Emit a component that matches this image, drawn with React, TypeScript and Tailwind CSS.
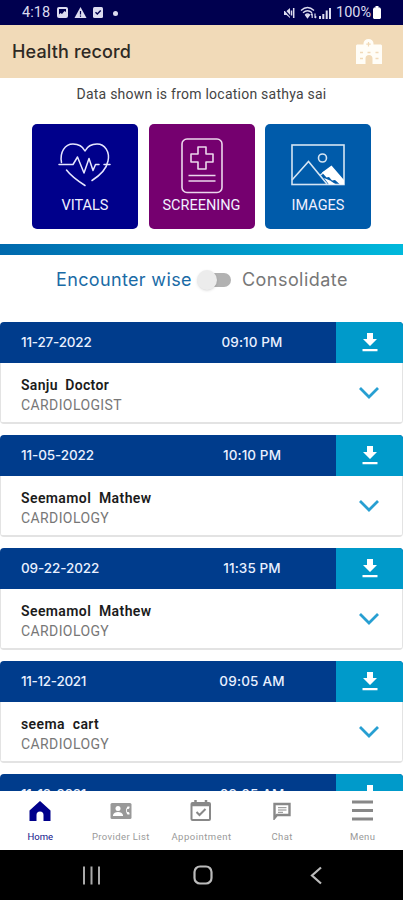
import React from "react";

type Encounter = { date: string; time: string; name: string; dept: string; dateGap: string; timeGap: string; nameGap: string };

const encounters: Encounter[] = [
  { date: "11-27-2022", time: "09:10 PM", name: "Sanju  Doctor", dept: "CARDIOLOGIST", dateGap: "tracking-[-0.2px]", timeGap: "tracking-[0.1px]", nameGap: "tracking-[0.3px]" },
  { date: "11-05-2022", time: "10:10 PM", name: "Seemamol  Mathew", dept: "CARDIOLOGY", dateGap: "tracking-[-0.1px]", timeGap: "tracking-[0.1px]", nameGap: "tracking-[0.4px]" },
  { date: "09-22-2022", time: "11:35 PM", name: "Seemamol  Mathew", dept: "CARDIOLOGY", dateGap: "tracking-[-0.1px]", timeGap: "tracking-[0.1px]", nameGap: "tracking-[0.4px]" },
  { date: "11-12-2021", time: "09:05 AM", name: "seema  cart", dept: "CARDIOLOGY", dateGap: "tracking-[-0.3px]", timeGap: "tracking-[0.2px]", nameGap: "tracking-[0.4px]" },
];

function StatusBar() {
  return (
    <div className="flex h-[25px] shrink-0 items-center bg-[#00004f] pl-[22px] pr-[21px] text-[#dcdcf0]">
      <span className="w-[30px] whitespace-nowrap text-[14.5px] leading-[26px] tracking-[0.1px]">4:18</span>
      <svg className="ml-[4px]" width="13" height="13" viewBox="0 0 13 13">
        <rect x="1" y="1" width="11" height="11" rx="2" fill="currentColor" />
        <path d="M3 3h7v3L8.500 5 6 8 4.500 7 3 8.500z" fill="#00004f" />
      </svg>
      <svg className="ml-[5px]" width="13" height="13" viewBox="0 0 13 13">
        <path d="M6.500 1 12.500 12H.5z" fill="currentColor" />
        <path d="M6.500 5v3.500M6.500 9.500v1.300" stroke="#00004f" strokeWidth="1.200" />
      </svg>
      <svg className="ml-[5px]" width="12" height="13" viewBox="0 0 12 13">
        <rect x="1" y="1" width="10" height="11" rx="1.500" fill="currentColor" />
        <path d="M3.500 6.300 5.300 8 8.700 4.500" fill="none" stroke="#00004f" strokeWidth="1.400" />
      </svg>
      <span className="ml-[9px] mt-[1px] h-[5px] w-[5px] rounded-full bg-[#dcdcf0]" />
      <div className="flex-1" />
      <svg width="12" height="12" viewBox="0 0 12 12" fill="currentColor">
        <path d="M1 4h2.500L7 1v10L3.500 8H1z" />
        <path d="M8.500 3.500v5M10.700 1v10" stroke="currentColor" strokeWidth="1.500" />
        <path d="M0 1.200 8 10" stroke="#00004f" strokeWidth="1.200" />
      </svg>
      <svg className="ml-[5px]" width="17" height="13" viewBox="0 0 17 13" fill="none" stroke="currentColor" strokeWidth="1.400">
        <path d="M1 4.500Q7.500-1.500 14 4.500M3 6.700q4.500-4 9 0M5.300 8.900q2.200-2 4.400 0" />
        <path d="M7.500 11.500 6 9.500h3z" fill="currentColor" />
        <path d="M12.200 12V7.500M10.900 9l1.300-1.500M15 7.500V12M16.300 10.500 15 12" strokeWidth="1.200" />
      </svg>
      <svg className="ml-[2px]" width="13" height="12" viewBox="0 0 13 12" fill="currentColor">
        <path d="M0 9h2v3H0zM3.300 7h2v5h-2zM6.700 3.500h2V12h-2zM10 1h2v11h-2z" />
      </svg>
      <span className="ml-[4px] w-[36px] whitespace-nowrap text-[14.5px] leading-[26px]">100%</span>
      <svg width="10" height="13" viewBox="0 0 10 13" fill="#fff">
        <path d="M3.500 0h3v1.500H8L9 3v9l-1 1H2l-1-1V3l1-1.500h1.500z" />
      </svg>
    </div>
  );
}

function HospitalIcon() {
  return (
    <svg width="28" height="26" viewBox="0 0 28 26">
      <path d="M1 6.500 2 5.500H8.500V4.500a5 4.500 0 0 1 10 0v1H26l1 1V25H17.500v-5.500a3 3 0 0 0-7 0V25H1z" fill="#fffdf7" />
      <path d="M13.500 3v4.500M11.300 5.200h4.400" stroke="#f1dab8" strokeWidth="1.200" />
      <path d="M5 13.500h3M12.500 13.500h3M20.500 13.500h3M5 19.500h3M20.500 19.500h3" stroke="#f1dab8" strokeWidth="1.700" />
    </svg>
  );
}

function HeartIcon() {
  return (
    <svg width="54" height="46" viewBox="0 0 54 46" fill="none" stroke="#e6e6ff" strokeWidth="1.500" strokeLinecap="round" strokeLinejoin="round">
      <path d="M3.500 20.500C1.500 10 7 2 15 2c6 0 10 3 12 7 2-4 6-7 12-7 8 0 13 8 11 17-1.500 8-9 15-16 19.500" />
      <path d="M8.500 28C13 34 20 39 27 43.500" />
      <path d="M1 22.500h14l4.500-7.500L26 31l5-14.500 4 12 2.500-6H41M46 22.500h6" />
    </svg>
  );
}

function ClipboardIcon() {
  return (
    <svg width="42" height="56" viewBox="0 0 42 56" fill="none" stroke="#ecd6ec" strokeWidth="1.600" strokeLinejoin="round">
      <rect x="1" y="1" width="40" height="53.500" rx="5" />
      <path d="M17 9h8v7h7v8h-7v7h-8v-7h-7v-8h7zM7.500 37.500h27M7.500 43h27" />
    </svg>
  );
}

function PictureIcon() {
  return (
    <svg width="54" height="42" viewBox="0 0 54 42" fill="none" stroke="#d5e5f3" strokeWidth="1.600">
      <rect x="1" y="1" width="52" height="39.500" />
      <path d="M1 36 17.500 17.500 36 40M29 31.500l4-3.500" />
      <circle cx="31.500" cy="14" r="4" />
      <path d="M31 28.500 40.500 21.500 53 36v4.500H49L44 36l-3 .5-3-3.500-2.500.5z" fill="#fff" stroke="none" />
      <path d="M33 34l5 6.500h7l-6-4z" fill="#fff" stroke="none" />
    </svg>
  );
}

function Tile({ label, className, iconBox, children }: { label: string; className: string; iconBox: string; children: React.ReactNode }) {
  return (
    <div className={`flex h-[105px] w-[106px] flex-col items-center rounded-[5px] ${className}`}>
      <div className={`h-[71px] ${iconBox}`}>{children}</div>
      <span className="whitespace-nowrap text-[14.5px] leading-[21px] text-[#f0f0ff]">{label}</span>
    </div>
  );
}

function CardHeader({ date, time, dateGap, timeGap }: { date: string; time: string; dateGap: string; timeGap: string }) {
  return (
    <div className="flex h-[41px] bg-[#003c8c] text-[#e9f0ff]">
      <div className="w-[168px] pl-[21px] font-[Inter] text-[13.5px] font-medium leading-[41px]">
        <span className={dateGap}>{date}</span>
      </div>
      <div className="w-[168px] text-center font-[Inter] text-[13.5px] font-medium leading-[41px]">
        <span className={timeGap}>{time}</span>
      </div>
      <div className="flex flex-1 justify-center bg-[#009aca] pt-[10px]">
        <svg width="16" height="20" viewBox="0 0 16 20" fill="#fff">
          <path d="M5 1h6v6h4L8 14 1 7h4zM.5 17h15v2.200H.5z" />
        </svg>
      </div>
    </div>
  );
}

function EncounterCard({ e }: { e: Encounter }) {
  return (
    <div className="h-[102px] w-full shrink-0 overflow-hidden rounded-[4px] border-b-2 border-[#e3e3e3] bg-white">
      <CardHeader date={e.date} time={e.time} dateGap={e.dateGap} timeGap={e.timeGap} />
      <div className="flex h-[59px] justify-between border-x border-[#e3e3e3] pl-[20px] pr-[22px]">
        <div className="pt-[12px]">
          <div className={`whitespace-pre text-[14px] font-semibold leading-[20px] text-[#1b1b1b] ${e.nameGap}`}>{e.name}</div>
          <div className="text-[14px] leading-[20px] tracking-[0.4px] text-[#777]">{e.dept}</div>
        </div>
        <svg className="mt-[22px]" width="22" height="16" viewBox="0 0 22 16" fill="none" stroke="#279fd2" strokeWidth="2.800">
          <path d="M2 3l9 9 9-9" />
        </svg>
      </div>
    </div>
  );
}

function NavItem({ label, className, children }: { label: string; className: string; children: React.ReactNode }) {
  return (
    <div className={`flex w-1/5 flex-col items-center ${className}`}>
      <div className="flex h-[39px] items-center justify-center">{children}</div>
      <span className="whitespace-nowrap text-[9.5px] leading-[13px]">{label}</span>
    </div>
  );
}

export default function App() {
  return (
    <div className="flex h-[900px] w-[403px] flex-col overflow-hidden bg-white font-[Roboto,sans-serif]">
      <StatusBar />
      <div className="flex h-[53px] shrink-0 items-center justify-between bg-[#f1dab8] pl-[12px] pr-[20px]">
        <h1 className="whitespace-nowrap font-[Inter] text-[18px] font-medium leading-[24px] tracking-[0.15px] text-[#2e2924]">Health record</h1>
        <HospitalIcon />
      </div>
      <p className="h-[46px] shrink-0 whitespace-nowrap pt-[6px] text-center text-[14px] leading-[20px] tracking-[0.24px] text-[#444]">Data shown is from location sathya sai</p>
      <div className="flex shrink-0 gap-[10.500px] pl-[32px]">
        <Tile label="VITALS" className="bg-[#00008b]" iconBox="pt-[18px]"><HeartIcon /></Tile>
        <Tile label="SCREENING" className="bg-[#75006f]" iconBox="pt-[14px]"><ClipboardIcon /></Tile>
        <Tile label="IMAGES" className="bg-[#005baa]" iconBox="pt-[20px]"><PictureIcon /></Tile>
      </div>
      <div className="mt-[15px] h-[11px] shrink-0 bg-gradient-to-r from-[#0069ad] to-[#00b9dc]" />
      <div className="flex h-[67px] shrink-0 pl-[56px] pt-[13px] font-[Inter] text-[18px] leading-[24px]">
        <span className="w-[141px] whitespace-nowrap tracking-[0.35px] text-[#1a6ba6]">Encounter wise</span>
        <div className="relative mt-[5px] h-[14px] w-[34px]">
          <div className="ml-[6px] h-[14px] w-[28px] rounded-full bg-[#b2b2b2]" />
          <div className="absolute -top-[3px] left-0 h-[20px] w-[20px] rounded-full bg-[#ececec] shadow-sm" />
        </div>
        <span className="ml-[11px] whitespace-nowrap tracking-[0.45px] text-[#777]">Consolidate</span>
      </div>
      <div className="flex h-[469px] shrink-0 flex-col gap-[11px] overflow-hidden">
        {encounters.map((e) => <EncounterCard key={e.date} e={e} />)}
        <div className="h-[17px] shrink-0 overflow-hidden rounded-t-[4px]">
          <CardHeader date="11-12-2021" time="09:05 AM" dateGap="tracking-[-0.3px]" timeGap="tracking-[0.1px]" />
        </div>
      </div>
      <div className="flex h-[59px] shrink-0 bg-white">
        <NavItem label="Home" className="text-[#10108a]">
          <svg width="22" height="22" viewBox="0 0 22 22" fill="#00008b"><path d="M11 1 21.500 10.500V21H14.500V15a3.500 3.500 0 0 0-7 0v6H.5V10.500z" /></svg>
        </NavItem>
        <NavItem label="Provider List" className="tracking-[0.4px] text-[#999]">
          <svg width="22" height="18" viewBox="0 0 22 18">
            <rect x=".5" y="1" width="21" height="16" rx="1.500" fill="#999" />
            <circle cx="8" cy="6.500" r="2.500" fill="#fff" />
            <path d="M3 14v-1q1-3 5-3t5 3v1zM19.500 4.500h-2a7 7 0 0 0 0 8h2V11l-1-1h-1.300a4 4 0 0 1 0-3h1.300l1-1z" fill="#fff" />
          </svg>
        </NavItem>
        <NavItem label="Appointment" className="tracking-[0.5px] text-[#999]">
          <svg width="22" height="24" viewBox="0 0 22 24" fill="none" stroke="#888" strokeWidth="2">
            <rect x="1.500" y="4" width="18.500" height="17" rx="1" />
            <path d="M2 6h18M5.500 1v4M16 1v4" strokeWidth="2.500" />
            <path d="m6.500 13 3 3 6-6" />
          </svg>
        </NavItem>
        <NavItem label="Chat" className="tracking-[0.4px] text-[#999]">
          <svg width="18" height="18" viewBox="0 0 18 18" fill="none" stroke="#888" strokeWidth="2.400">
            <path d="M1.500 16V2h15v11H4z" />
            <path d="M5 5.700h8.500M5 8h8.500M5 10.300h5" strokeWidth="1" />
          </svg>
        </NavItem>
        <NavItem label="Menu" className="tracking-[0.4px] text-[#999]">
          <svg width="21" height="21" viewBox="0 0 21 21" stroke="#888" strokeWidth="3"><path d="M0 2h21M0 10.500h21M0 19h21" /></svg>
        </NavItem>
      </div>
      <div className="flex h-[50px] shrink-0 items-center bg-black pl-[82px]">
        <svg width="19" height="19" viewBox="0 0 19 19" stroke="#aaa" strokeWidth="2"><path d="M2 .5v18M9.500.5v18M17 .5v18" /></svg>
        <svg className="ml-[92px]" width="20" height="20" viewBox="0 0 20 20" fill="none" stroke="#bbb" strokeWidth="2.200"><rect x="1.500" y="1.500" width="17" height="17" rx="5.500" /></svg>
        <svg className="ml-[97px]" width="13" height="19" viewBox="0 0 13 19" fill="none" stroke="#bbb" strokeWidth="2.200"><path d="M11 1.500 2 9.500l9 8" /></svg>
      </div>
    </div>
  );
}
